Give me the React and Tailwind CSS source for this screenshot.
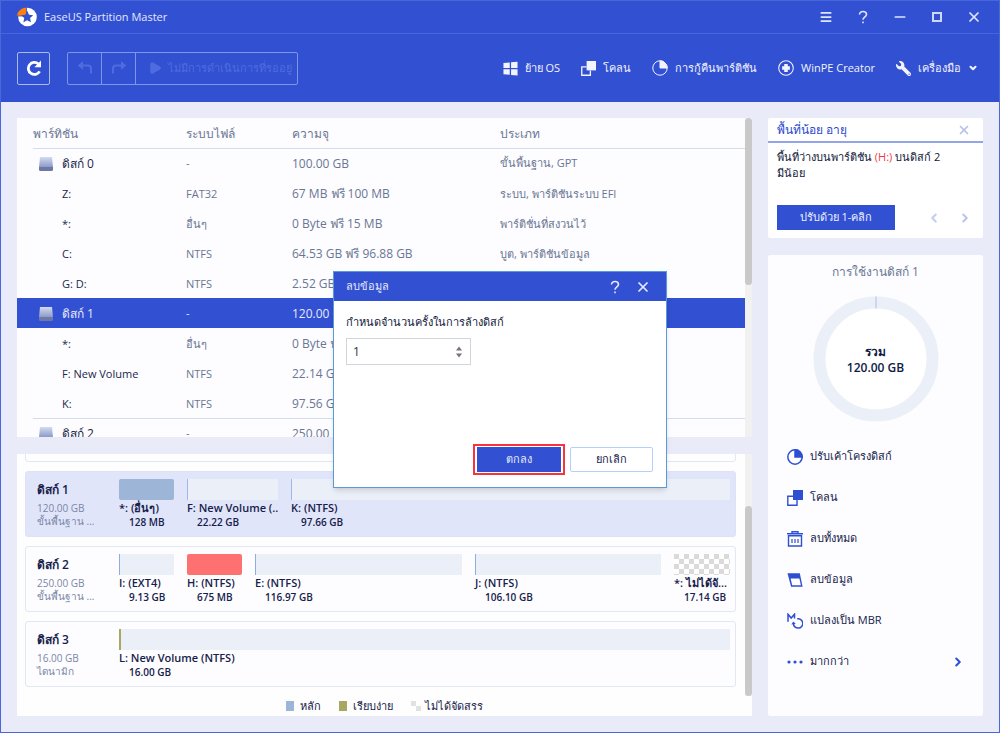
import React, { useState } from 'react';
import { ChevronDown, ChevronLeft, ChevronRight, Menu, Minus, Play, X } from 'lucide-react';
import { FaWrench } from 'react-icons/fa';

const rows = [
  { disk: true, name: 'ดิสก์ 0', fs: '-', capacity: '100.00 GB', type: 'ขั้นพื้นฐาน, GPT' },
  { name: 'Z:', fs: 'FAT32', capacity: '67 MB ฟรี 100 MB', type: 'ระบบ, พาร์ติชันระบบ EFI' },
  { name: '*:', fs: 'อื่นๆ', capacity: '0 Byte ฟรี 15 MB', type: 'พาร์ติชั่นที่สงวนไว้' },
  { name: 'C:', fs: 'NTFS', capacity: '64.53 GB ฟรี 96.88 GB', type: 'บูต, พาร์ติชันข้อมูล' },
  { name: 'G: D:', fs: 'NTFS', capacity: '2.52 GB', type: '' },
  { disk: true, selected: true, name: 'ดิสก์ 1', fs: '-', capacity: '120.00 GB', type: '' },
  { name: '*:', fs: 'อื่นๆ', capacity: '0 Byte ฟรี', type: '' },
  { name: 'F: New Volume', fs: 'NTFS', capacity: '22.14 GB', type: '' },
  { name: 'K:', fs: 'NTFS', capacity: '97.56 GB', type: '' },
  { disk: true, name: 'ดิสก์ 2', fs: '-', capacity: '250.00 GB', type: '' },
];

const disks = [
  {
    name: 'ดิสก์ 1',
    size: '120.00 GB',
    kind: 'ขั้นพื้นฐาน ...',
    selected: true,
    parts: [
      { label: '*: (อื่นๆ)', size: '128 MB', grow: 55, bar: 'bg-[#9db5d6] rounded-xs' },
      { label: 'F: New Volume (..', size: '22.22 GB', grow: 91, bar: 'bg-[#ebeff8] border-l border-[#a3b8e4]' },
      { label: 'K: (NTFS)', size: '97.66 GB', grow: 439, bar: 'bg-[#ebeff8] border-l border-[#a3b8e4]' },
    ],
  },
  {
    name: 'ดิสก์ 2',
    size: '250.00 GB',
    kind: 'ขั้นพื้นฐาน ...',
    parts: [
      { label: 'I: (EXT4)', size: '9.13 GB', grow: 55, bar: 'bg-[#ebeff8] border-l border-[#8fadde]' },
      { label: 'H: (NTFS)', size: '675 MB', grow: 55, bar: 'bg-[#ff7070] rounded-xs' },
      { label: 'E: (NTFS)', size: '116.97 GB', grow: 207, bar: 'bg-[#ebeff8] border-l border-[#8fadde]' },
      { label: 'J: (NTFS)', size: '106.10 GB', grow: 186, bar: 'bg-[#ebeff8] border-l border-[#8fadde]' },
      {
        label: '*: ไม่ได้จั...',
        size: '17.14 GB',
        grow: 56,
        bar: 'bg-[repeating-conic-gradient(#ffffff_0%_25%,#dadada_0%_50%)] bg-[length:10px_10px]',
      },
    ],
  },
  {
    name: 'ดิสก์ 3',
    size: '16.00 GB',
    kind: 'ไดนามิก',
    parts: [{ label: 'L: New Volume (NTFS)', size: '16.00 GB', grow: 611, bar: 'bg-[#ebeff8] border-l-2 border-[#a8a862]' }],
  },
];

const PieIcon = ({ className, strokeWidth = 1.5 }) => (
  <svg viewBox="0 0 16 16" className={className} fill="none" stroke="currentColor" strokeWidth={strokeWidth}>
    <circle cx="8" cy="8" r="7.2" />
    <path d="M8 8V0.8A7.2 7.2 0 0 1 15.2 8Z" fill="currentColor" />
  </svg>
);

const CloneIcon = ({ className }) => (
  <svg viewBox="0 0 16 16" className={className} fill="none" stroke="currentColor" strokeWidth="1.4">
    <path d="M6 6.2H0.8V15.2H10V10" />
    <rect x="6" y="0" width="10" height="10" fill="currentColor" stroke="none" />
  </svg>
);

const WindowsIcon = ({ className }) => (
  <svg viewBox="0 0 16 16" className={className} fill="currentColor">
    <path d="M0.5 2L7.2 1.6V7.4H0.5ZM8.6 1.4L15.5 0.8V7.4H8.6ZM0.5 8.8H7.2V14.6L0.5 14.2ZM8.6 8.8H15.5V15.4L8.6 14.8Z" />
  </svg>
);

const WinPEIcon = ({ className }) => (
  <svg viewBox="0 0 18 18" className={className} fill="none" stroke="currentColor">
    <circle cx="9" cy="9" r="8.2" strokeWidth="1.2" />
    <path d="M9 4.6V13.4M4.6 9H13.4" strokeWidth="4" />
  </svg>
);

const WrenchIcon = ({ className }) => <FaWrench className={`${className} -scale-x-100`} />;

const TrashIcon = ({ className }) => (
  <svg viewBox="0 0 16 16" className={className} fill="none" stroke="currentColor" strokeWidth="1.4">
    <path d="M0 2.7H16M5 2V0.8H11V2" />
    <path d="M1.5 4.8H14.5V15H1.5Z" />
    <path d="M5 8V12M8 8V12M11 8V12" strokeWidth="1.2" />
  </svg>
);

const EraserIcon = ({ className }) => (
  <svg viewBox="0 0 16 16" className={className}>
    <path d="M0.5 1.2H12.8L15.6 14.8H4.1Z" fill="currentColor" />
    <path d="M3.6 6.6H12.4L13.9 13.3H5.2Z" fill="white" />
  </svg>
);

const ConvertIcon = ({ className }) => (
  <svg viewBox="0 0 16 16" className={className} fill="none" stroke="currentColor" strokeWidth="1.5">
    <path d="M1 8.8V1.2L4.2 5L7.5 1.2V5.6" />
    <path d="M10.2 5.8A4.7 4.7 0 1 1 6.4 10.4" />
    <path d="M4.4 11.4L6.3 8.6L8.8 11Z" fill="currentColor" stroke="none" />
  </svg>
);

const DotsIcon = ({ className }) => (
  <svg viewBox="0 0 16 16" className={className} fill="currentColor">
    <circle cx="2" cy="8" r="1.6" />
    <circle cx="8" cy="8" r="1.6" />
    <circle cx="14" cy="8" r="1.6" />
  </svg>
);

const QuestionIcon = ({ className }) => (
  <svg viewBox="0 0 12 16" className={className} fill="none" stroke="currentColor" strokeWidth="1.8">
    <path d="M2 5.2C2 2.9 3.7 1.8 6 1.8S10 3 10 5C10 7.8 6 7.8 6 11.2" />
    <path d="M6 13V15" />
  </svg>
);

const Logo = () => (
  <svg viewBox="0 0 22 20" className="w-[22px] h-5">
    <circle cx="11.5" cy="10" r="9.3" fill="white" />
    <path d="M10.5 9V0.2A10 10 0 0 0 0.5 9Z" fill="#ff7f0e" stroke="#3250d2" strokeWidth="0.8" />
    <path d="M11.2 3.8L13 7.7L17.2 8.2L14.1 11.1L14.9 15.3L11.2 13.2L7.4 15.3L8.2 11.1L5.1 8.2L9.3 7.7Z" fill="#3250d2" />
  </svg>
);

const DriveIcon = () => (
  <svg viewBox="0 0 14 14" className="w-3.5 h-3.5">
    <defs>
      <linearGradient id="drive" x1="0" y1="0" x2="0" y2="1">
        <stop offset="0%" stopColor="#d3dbf0" />
        <stop offset="100%" stopColor="#8c9aca" />
      </linearGradient>
    </defs>
    <path d="M1 0H13L14 10H0Z" fill="url(#drive)" />
    <path d="M0 10H14V12.5Q14 14 12.5 14H1.5Q0 14 0 12.5Z" fill="#6d78a5" />
  </svg>
);

const navItems = [
  { icon: WindowsIcon, label: 'ย้าย OS', size: 'w-[15px] h-[15px]' },
  { icon: CloneIcon, label: 'โคลน', size: 'w-[15px] h-[15px]' },
  { icon: PieIcon, label: 'การกู้คืนพาร์ติชัน', size: 'w-4 h-4' },
  { icon: WinPEIcon, label: 'WinPE Creator', size: 'w-4 h-4' },
  { icon: WrenchIcon, label: 'เครื่องมือ', size: 'w-[15px] h-[15px]', more: true },
];

const actions = [
  { icon: PieIcon, label: 'ปรับเค้าโครงดิสก์' },
  { icon: CloneIcon, label: 'โคลน' },
  { icon: TrashIcon, label: 'ลบทั้งหมด' },
  { icon: EraserIcon, label: 'ลบข้อมูล' },
  { icon: ConvertIcon, label: 'แปลงเป็น MBR' },
  { icon: DotsIcon, label: 'มากกว่า', more: true },
];

const TitleBar = () => (
  <div className="h-[33px] flex items-center justify-between pl-[15px] pr-[17px] border-b border-[#4766de]">
    <div className="flex items-center gap-1.5">
      <Logo />
      <h1 className="text-[11px] text-[#e3e8fb]">EaseUS Partition Master</h1>
    </div>
    <div className="flex items-center gap-[21px] text-[#dfe5fb]">
      <button aria-label="Menu" className="w-4 flex justify-center"><Menu className="w-3.5 h-3.5" strokeWidth={3} /></button>
      <button aria-label="Help" className="w-4 flex justify-center"><QuestionIcon className="w-3 h-3.5" /></button>
      <button aria-label="Minimize" className="w-4 flex justify-center"><Minus className="w-4 h-4" strokeWidth={2.6} /></button>
      <button aria-label="Maximize" className="w-4 flex justify-center"><span className="w-2.5 h-2.5 border-2 border-[#cfd7f7]" /></button>
      <button aria-label="Close" className="w-4 flex justify-center"><X className="w-4 h-4" strokeWidth={2.6} /></button>
    </div>
  </div>
);

const Toolbar = () => (
  <div className="h-[68px] flex items-center justify-between pl-4 pr-[21px] text-[11px]">
    <div className="flex items-center gap-[17px]">
      <button aria-label="Refresh" className="w-[33px] h-[33px] flex items-center justify-center border border-[#a9b8f0] rounded-xs">
        <svg viewBox="0 0 16 16" className="w-4 h-4" fill="none" stroke="white" strokeWidth="2.8">
          <path d="M13.6 11.4A6 6 0 1 1 12.4 4" />
          <path d="M15 0.5V7.2H8.4Z" fill="white" stroke="none" />
        </svg>
      </button>
      <div className="h-[33px] flex border border-[#7f95e8] rounded-xs text-[#4f6cdf] divide-x divide-[#7f95e8]">
        <button aria-label="Undo" className="w-[34px] flex items-center justify-center">
          <svg viewBox="0 0 16 16" className="w-4 h-4" fill="none" stroke="currentColor" strokeWidth="2">
            <path d="M4 5.5H11Q14 5.5 14 8.5V13.5" />
            <path d="M6 1V10L0.8 5.5Z" fill="currentColor" stroke="none" />
          </svg>
        </button>
        <button aria-label="Redo" className="w-[34px] flex items-center justify-center">
          <svg viewBox="0 0 16 16" className="w-4 h-4" fill="none" stroke="currentColor" strokeWidth="2">
            <path d="M12 5.5H5Q2 5.5 2 8.5V13.5" />
            <path d="M10 1V10L15.2 5.5Z" fill="currentColor" stroke="none" />
          </svg>
        </button>
        <button className="flex items-center gap-1.5 pl-3 pr-[5px]">
          <Play className="w-3.5 h-3.5" fill="currentColor" />
          ไม่มีการดำเนินการที่รออยู่
        </button>
      </div>
    </div>
    <nav className="flex items-center gap-[21px] text-[#f2f4fd]">
      {navItems.map(({ icon: Icon, label, size, more }) => (
        <button key={label} className="flex items-center gap-[7px]">
          <Icon className={size} strokeWidth={1} />
          {label}
          {more && <ChevronDown className="w-2.5 h-2.5" strokeWidth={5} />}
        </button>
      ))}
    </nav>
  </div>
);

const PartitionTable = () => (
  <section className="flex-1 min-h-0 flex bg-[#fdfdff]">
    <div className="flex-1 min-w-0 overflow-hidden">
      <table className="w-full table-fixed border-separate border-spacing-0 text-left text-[#6b7694]">
        <colgroup>
          <col className="w-4" />
          <col className="w-[153px]" />
          <col className="w-[106px]" />
          <col className="w-52" />
          <col />
        </colgroup>
        <thead>
          <tr className="h-[30px]">
            <th />
            <th className="font-normal pt-0.5">พาร์ทิชัน</th>
            <th className="font-normal pt-0.5">ระบบไฟล์</th>
            <th className="font-normal pt-0.5">ความจุ</th>
            <th className="font-normal pt-0.5">ประเภท</th>
          </tr>
        </thead>
        <tbody>
          {rows.map((row, index) => {
            const line = row.disk ? (row.selected ? 'border-t border-[#3250d2]' : 'border-t border-[#d5dcee]') : 'pt-0.5';
            return (
              <tr key={index} className={`h-[30px] whitespace-nowrap ${row.selected ? 'bg-[#3250d2] text-[#e6eafb]' : ''}`}>
                <td />
                <td className={`${line} ${row.disk ? '' : 'text-[11px]'} ${row.selected ? '' : 'text-[#1c2748]'}`}>
                  <div className="flex items-center gap-[9px] pl-1.5">
                    <span className="w-3.5 shrink-0">{row.disk && <DriveIcon />}</span>
                    {row.name}
                  </div>
                </td>
                <td className={`${line} text-[11px]`}>{row.fs}</td>
                <td className={line}>{row.capacity}</td>
                <td className={`${line} text-[11px]`}>{row.type}</td>
              </tr>
            );
          })}
        </tbody>
      </table>
    </div>
    <div className="w-[7px] bg-[#f1f1f1]">
      <div className="h-[167px] bg-[#c9c9c9] rounded-full" />
    </div>
  </section>
);

const DiskCard = ({ disk }) => (
  <div className={`h-[66px] shrink-0 flex border rounded-[3px] pl-[11px] pr-[5px] text-[#16214a] ${disk.selected ? 'bg-[#e1e5fa] border-[#dde2f8]' : 'bg-[#fdfdff] border-[#e2e7f4]'}`}>
    <div className="w-[82px] shrink-0 pt-2.5">
      <div className="font-semibold leading-[16px] mb-1">{disk.name}</div>
      <div className="text-[10px] leading-[13px] text-[#7a86a6]">{disk.size}</div>
      <div className="text-[10px] leading-[13px] text-[#7a86a6]">{disk.kind}</div>
    </div>
    <div className="flex-1 min-w-0 flex gap-[13px] pt-[7px]">
      {disk.parts.map((part) => (
        <div key={part.label} className="min-w-0 font-semibold whitespace-nowrap" style={{ flex: `${part.grow} 1 0` }}>
          <div className={`h-[21px] ${part.bar}`} />
          <div className="text-[11px] leading-[16px]">{part.label}</div>
          <div className="text-[10px] leading-[13px] pl-2.5">{part.size}</div>
        </div>
      ))}
    </div>
  </div>
);

const DiskMap = () => (
  <section className="h-[262px] shrink-0 flex flex-col bg-[#fefefe]">
    <div className="flex-1 min-h-0 flex">
      <div className="flex-1 min-w-0 flex flex-col justify-end gap-[9px] pl-2 pr-[9px] pb-[9px] overflow-hidden">
        <div className="h-[66px] shrink-0 border border-[#e2e7f4] rounded-[3px]" />
        {disks.map((disk) => (
          <DiskCard key={disk.name} disk={disk} />
        ))}
      </div>
      <div className="w-[7px] bg-[#f1f1f1] flex flex-col justify-end">
        <div className="h-[190px] bg-[#c9c9c9] rounded-full" />
      </div>
    </div>
    <div className="h-5 flex items-center justify-center gap-[18px] text-[11px] font-medium text-[#16214a]">
      <span className="flex items-center gap-1.5"><i className="w-2 h-2.5 bg-[#9db5d6]" />หลัก</span>
      <span className="flex items-center gap-1.5"><i className="w-2 h-2.5 bg-[#a8a862]" />เรียบง่าย</span>
      <span className="flex items-center gap-1">
        <i className="w-2.5 h-2.5 bg-[repeating-conic-gradient(#ffffff_0%_25%,#e2e2e2_0%_50%)]" />
        ไม่ได้จัดสรร
      </span>
    </div>
  </section>
);

const AlertCard = () => (
  <section className="h-[120px] shrink-0 bg-white rounded-xs flex flex-col">
    <div className="h-[25px] flex items-center justify-between pl-[9px] pr-3 border-b-2 border-[#93a4e8]">
      <h2 className="font-medium text-[#2b49cf]">พื้นที่น้อย อายุ</h2>
      <button aria-label="Dismiss"><X className="w-3.5 h-3.5 text-[#b4c2ec]" strokeWidth={3} /></button>
    </div>
    <p className="pl-[9px] pr-8 pt-1.5 text-[11px] leading-[16px] font-medium text-[#10183a]">
      พื้นที่ว่างบนพาร์ติชัน <span className="text-[#f03c46] font-normal">(H:)</span> บนดิสก์ 2
      <br />
      มีน้อย
    </p>
    <div className="mt-auto mb-2 flex items-center pl-[9px] pr-[11px]">
      <button className="w-[118px] h-[25px] bg-[#3250d2] text-[#eef1fd] text-[11px]">ปรับด้วย 1-คลิก</button>
      <button aria-label="Previous" className="ml-auto mr-[17px]"><ChevronLeft className="w-3.5 h-3.5 text-[#c3cdf0]" strokeWidth={3.5} /></button>
      <button aria-label="Next"><ChevronRight className="w-3.5 h-3.5 text-[#b9c5ee]" strokeWidth={3.5} /></button>
    </div>
  </section>
);

const UsageCard = () => (
  <section className="flex-1 bg-[#fdfdff] rounded-xs">
    <h2 className="pt-2 text-center leading-[17px] font-medium text-[#6b7694]">การใช้งานดิสก์ 1</h2>
    <div className="grid place-items-center mt-4">
      <svg viewBox="0 0 126 126" className="col-start-1 row-start-1 w-[126px] h-[126px]">
        <circle cx="63" cy="63" r="56.5" fill="white" stroke="#ebeff8" strokeWidth="12" />
        <path d="M63 0.5V12.5" stroke="#c3cfee" strokeWidth="1.5" />
      </svg>
      <div className="col-start-1 row-start-1 pt-0.5 text-center leading-[16px] font-semibold text-[#0f1a45]">
        <div>รวม</div>
        <div>120.00 GB</div>
      </div>
    </div>
    <ul className="mt-3.5 pl-[19px] pr-[18px]">
      {actions.map(({ icon: Icon, label, more }) => (
        <li key={label}>
          <button className="w-full h-[41px] flex items-center gap-[7px] text-[11px] font-medium text-[#16214a]">
            <Icon className="w-4 h-4 text-[#2f4fd3]" />
            {label}
            {more && <ChevronRight className="ml-auto w-3.5 h-3.5 text-[#2f4fd3]" strokeWidth={3.5} />}
          </button>
        </li>
      ))}
    </ul>
  </section>
);

const WipeDialog = () => {
  const [times, setTimes] = useState(1);

  return (
    <div className="absolute inset-0 pt-[26px] flex items-center justify-center">
      <div role="dialog" aria-labelledby="wipe-title" className="w-[334px] bg-white border border-[#5b9bd5] shadow-md">
        <div className="h-[29px] flex items-center pl-3 pr-[15px] bg-[#3250d2] text-[#e6eafb]">
          <h2 id="wipe-title" className="text-[11px]">ลบข้อมูล</h2>
          <button aria-label="Help" className="ml-auto mr-3.5"><QuestionIcon className="w-3 h-3.5" /></button>
          <button aria-label="Close"><X className="w-4 h-4" strokeWidth={2.6} /></button>
        </div>
        <div className="pt-[13px] px-3">
          <label htmlFor="wipe-times" className="block text-[11px] leading-[16px] font-medium text-[#10183a]">กำหนดจำนวนครั้งในการล้างดิสก์</label>
          <div className="mt-2 w-[125px] h-[27px] flex items-center border border-[#d3d5dc] pl-1.5 pr-2">
            <input
              id="wipe-times"
              type="number"
              min="1"
              value={times}
              onChange={(e) => setTimes(Number(e.target.value))}
              className="flex-1 min-w-0 text-[#2a3150] outline-none [appearance:textfield] [&::-webkit-inner-spin-button]:appearance-none"
            />
            <div className="flex flex-col gap-0.5 text-[#7a707a]">
              <button aria-label="Increase" onClick={() => setTimes(times + 1)}>
                <svg viewBox="0 0 6 5" className="w-1.5 h-[5px]" fill="currentColor"><path d="M3 0.5L6 4.5H0Z" /></svg>
              </button>
              <button aria-label="Decrease" onClick={() => setTimes(Math.max(1, times - 1))}>
                <svg viewBox="0 0 6 5" className="w-1.5 h-[5px]" fill="currentColor"><path d="M3 4.5L6 0.5H0Z" /></svg>
              </button>
            </div>
          </div>
        </div>
        <div className="mt-[79px] mb-3 pr-[13px] flex items-center justify-end gap-[5px] text-[11px] font-medium">
          <div className="border-2 border-[#f8333c] px-0.5 py-px">
            <button className="block w-[84px] h-[25px] bg-[#3250d2] text-[#e6eafb]">ตกลง</button>
          </div>
          <button className="w-[83px] h-[25px] border border-[#b5d0fb] rounded-xs text-[#16214a]">ยกเลิก</button>
        </div>
      </div>
    </div>
  );
};

const App = () => (
  <div className="relative h-screen flex flex-col border border-[#4a66dd] bg-[#e9ecf8] text-xs font-['Open_Sans','Noto_Sans',sans-serif]">
    <header className="shrink-0 bg-[#3250d2]">
      <TitleBar />
      <Toolbar />
    </header>
    <main className="flex-1 min-h-0 flex gap-4 p-4">
      <div className="flex-1 min-w-0 flex flex-col gap-[17px]">
        <PartitionTable />
        <DiskMap />
      </div>
      <aside className="w-[215px] shrink-0 flex flex-col gap-[17px]">
        <AlertCard />
        <UsageCard />
      </aside>
    </main>
    <WipeDialog />
  </div>
);

export default App;
